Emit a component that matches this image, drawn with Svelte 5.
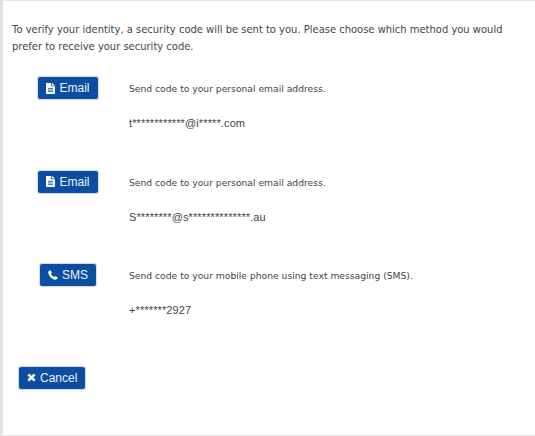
<script>
	const methods = [
		{ type: 'email', label: 'Email', text: 'Send code to your personal email address.', target: 't************@i*****.com' },
		{ type: 'email', label: 'Email', text: 'Send code to your personal email address.', target: 'S********@s**************.au' },
		{ type: 'sms', label: 'SMS', text: 'Send code to your mobile phone using text messaging (SMS).', target: '+*******2927' }
	];
</script>

<main>
	<p class="intro">To verify your identity, a security code will be sent to you. Please choose which method you would prefer to receive your security code.</p>

	<div class="methods">
		{#each methods as m}
			<div class="method">
				<div class="action">
					<button type="button">
						{#if m.type === 'email'}
							<svg width="9" height="11" viewBox="0 0 9 11"><path fill="#fff" d="M0 0h5.2v3.3h3.8V11H0z" /><path fill="#fff" d="M6 0l3 2.6H6z" /><path stroke="#0b4ea2" stroke-width=".8" d="M2 5.4h5M2 7h5M2 8.6h5" /></svg>
						{:else}
							<svg width="10" height="10" viewBox="0 0 10 10"><path fill="#fff" d="M2.3.3L3.9 2.6 3 3.8c.5 1.3 1.7 2.5 3.2 3.2l1.2-1 2.3 1.6c.2.7-1 2.2-2.1 2.1C3.800 9.500.5 5.800.2 2.300.2 1.300 1.500.2 2.300.3z" /></svg>
						{/if}
						{m.label}
					</button>
				</div>
				<div class="detail">
					<p>{m.text}</p>
					<p class="target">{m.target}</p>
				</div>
			</div>
		{/each}
	</div>

	<button type="button" class="cancel">
		<svg width="9" height="9" viewBox="0 0 9 9"><path stroke="#fff" stroke-width="2.6" d="M1.300 1.300l6.400 6.400M7.700 1.300L1.300 7.700" /></svg>
		Cancel
	</button>
</main>

<style>
	:global(body) {
		margin: 0;
		background: #fff;
	}

	main {
		box-sizing: border-box;
		height: 436px;
		padding: 20px 30px 0 12px;
		border-top: 1px solid #e4e4e4;
		border-bottom: 1px solid #e4e4e4;
		border-left: 3px solid #e2e2e2;
		font-family: "DejaVu Sans", Verdana, sans-serif;
		font-size: 9.960px;
		line-height: 17px;
		color: #444;
	}

	p {
		margin: 0;
	}

	.intro {
		margin-left: -3px;
	}

	.methods {
		margin-top: 21px;
	}

	.method {
		display: flex;
		height: 93.500px;
	}

	.action {
		width: 112px;
		flex: none;
		margin-left: -3px;
		display: flex;
		justify-content: center;
		align-items: flex-start;
	}

	.detail {
		padding-left: 5px;
		padding-top: 4px;
		font-size: 9.200px;
	}

	.target {
		margin-top: 18px;
		font-family: "Liberation Sans", Arial, sans-serif;
		font-size: 11px;
		letter-spacing: 0.12px;
	}

	button {
		display: inline-flex;
		align-items: center;
		gap: 4px;
		height: 24px;
		padding: 0 8px;
		border: 1px solid #d3dcea;
		border-radius: 3px;
		background: #0b4ea2;
		color: #eef3fa;
		font-family: "Liberation Sans", Arial, sans-serif;
		font-size: 12px;
	}

	.cancel {
		margin-top: 9px;
		margin-left: 3px;
	}
</style>
